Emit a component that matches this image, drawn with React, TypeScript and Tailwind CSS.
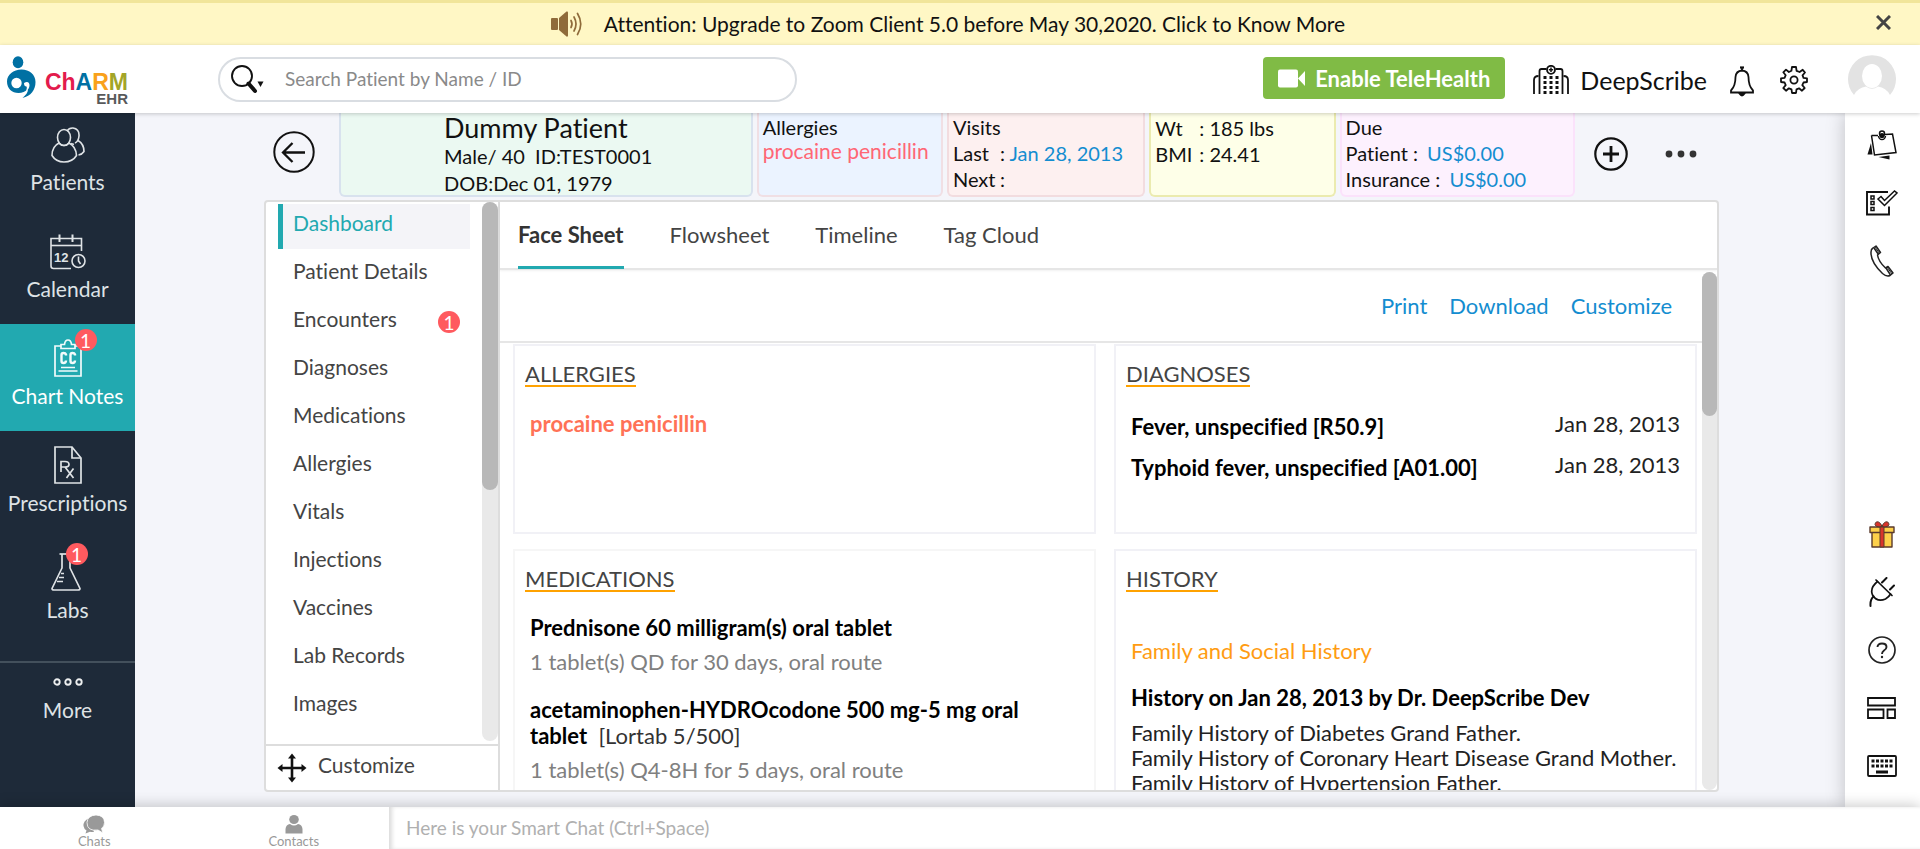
import type { ReactNode } from "react";

/* ---------- Icons ---------- */

const SpeakerIcon = () => (
  <svg width="32" height="26" viewBox="0 0 32 26" fill="#8f6b3a" aria-hidden="true">
    <rect x="0" y="7" width="7" height="12" rx="1" />
    <path d="M8 7 L15.5 0.5 Q17 0 17 1.5 V24.5 Q17 26 15.5 25.5 L8 19 Z" />
    <g fill="none" stroke="#8f6b3a" strokeWidth="1.7" strokeLinecap="round">
      <path d="M20 9.5 Q22 13 20 16.5" />
      <path d="M23 6 Q27 13 23 20" />
      <path d="M26.5 2.5 Q33 13 26.5 23.5" />
    </g>
  </svg>
);

const Logo = () => (
  <div className="flex w-[121px] shrink-0 items-start">
    <svg width="30" height="43" viewBox="0 0 30 43" aria-hidden="true">
      <ellipse cx="11" cy="6.200" rx="5.300" ry="6" fill="#0070a3" />
      <path d="M14.500 13.500 C22.500 13.500 28.500 18.500 28.500 26 C28.500 34 24 40 15.500 42 C19 39 21 36.500 21 33 C18.500 35.500 15 37 11.500 37 C5 37 0 32.500 0 25.500 C0 18.500 6.500 13.500 14.500 13.500 Z" fill="#0070a3" />
      <circle cx="9.500" cy="27" r="5.200" fill="#fff" />
      <path d="M17 27 Q22 24.500 22.500 29 Q22.500 33 18.500 35.500 Q20.500 32 19.500 30.500 Q17 30.500 17 27 Z" fill="#fff" />
    </svg>
    <div className="flex grow flex-col items-end pt-4 font-['Liberation_Sans'] font-bold">
      <span className="text-[23px] leading-[20px]">
        <span className="text-[#e31b4c]">Ch</span>
        <span className="text-[#0070a3]">A</span>
        <span className="text-[#f9a11b]">R</span>
        <span className="text-[#a3a528]">M</span>
      </span>
      <span className="text-[15px] leading-[14px] text-[#58595b]">EHR</span>
    </div>
  </div>
);

const SearchIcon = () => (
  <svg width="33" height="32" viewBox="0 0 33 32" aria-hidden="true">
    <circle cx="11" cy="12" r="10" fill="none" stroke="#111" strokeWidth="1.900" />
    <path d="M17.500 19.500 L24 27" stroke="#111" strokeWidth="4" strokeLinecap="round" />
    <path d="M26.500 17.500 h6 l-3 5.500 z" fill="#111" />
  </svg>
);

const VideoIcon = () => (
  <svg width="28" height="19" viewBox="0 0 28 19" fill="#fff" aria-hidden="true">
    <rect x="0" y="0.500" width="20" height="18" rx="2" />
    <path d="M27 2 V17 L20 9.500 Z" />
  </svg>
);

const HospitalIcon = () => (
  <svg width="36" height="30" viewBox="0 0 36 30" aria-hidden="true">
    <g fill="none" stroke="#111" strokeWidth="1.800">
      <path d="M13.500 4 H8.500 Q6.500 4 6.500 6 V29" />
      <path d="M22.500 4 H27.500 Q29.500 4 29.500 6 V29" />
      <path d="M5.500 11 Q1 11 1 15 V29" />
      <path d="M30.500 11 Q35 11 35 15 V29" />
      <circle cx="18" cy="4.800" r="4" />
      <path d="M18 2.500 V7 M15.800 4.800 H20.200" strokeWidth="1.500" />
    </g>
    <g fill="#111">
      {[10.5, 16.5, 22.5].map((x) =>
        [11, 16, 21, 26].map((y) => <rect key={`${x}-${y}`} x={x} y={y} width="3" height="3" />)
      )}
    </g>
  </svg>
);

const BellIcon = () => (
  <svg width="24" height="31" viewBox="0 0 24 31" fill="none" stroke="#111" strokeWidth="1.800" aria-hidden="true">
    <path d="M10 1.500 H14" strokeWidth="2.200" />
    <path d="M12 2 V5" />
    <path d="M1 26.500 V24.500 Q5.500 20 5.500 11 Q6 5 12 4.500 Q18 5 18.500 11 Q18.500 20 23 24.500 V26.500 Z" />
    <path d="M9.500 27.500 Q12 31.500 14.500 27.500 Z" fill="#111" />
  </svg>
);

const GearIcon = () => (
  <svg width="28" height="28" viewBox="0 0 28 28" fill="none" stroke="#111" strokeWidth="1.800" strokeLinejoin="round" aria-hidden="true">
    <path d="M12 1 H16 L16.600 4.800 L19.600 6 L22.700 3.800 L25 6.500 L22.500 9.300 L23.500 11.900 L27 12.300 V16 L23.500 16.500 L22.300 19.200 L24.700 22 L22 24.700 L19 22.300 L16.500 23.300 L16 27 H12 L11.500 23.300 L8.900 22.300 L6 24.700 L3.300 22 L5.700 19.200 L4.600 16.500 L1 16 V12.300 L4.600 11.800 L5.700 9.200 L3.300 6.300 L6 3.600 L8.900 6 L11.400 4.800 Z" />
    <circle cx="14" cy="14" r="3.600" />
  </svg>
);

const Avatar = () => (
  <svg width="48" height="48" viewBox="0 0 48 48" aria-hidden="true">
    <path d="M6 40 A24 24 0 1 1 42 40 Q38 32.500 30 31.500 Q24 36 18 31.500 Q10 32.500 6 40 Z" fill="#e3e3e3" />
    <ellipse cx="24" cy="21" rx="10" ry="12" fill="#fff" />
  </svg>
);

const PatientsIcon = () => (
  <svg width="34" height="36" viewBox="0 0 34 36" fill="none" stroke="#dfe3e6" strokeWidth="1.600" aria-hidden="true">
    <ellipse cx="13" cy="10.500" rx="6.500" ry="8" />
    <path d="M8 16 Q1 19.500 1 28.500 Q5 35 13 35 Q21.500 35 25.500 28.500 Q25 19.500 18 16 Q16 18.500 13 18.500 Q10 18.500 8 16 Z" />
    <path d="M16 4 Q18 0.800 22 1 Q28.500 2 28 9 Q27.500 14.500 24 16" />
    <path d="M27 13.500 Q33 17 33 24.500 Q31 27.500 27.500 28" />
    <path d="M20 16.500 L23 17.500" />
  </svg>
);

const CalendarIcon = () => (
  <svg width="36" height="36" viewBox="0 0 36 36" fill="none" stroke="#dfe3e6" strokeWidth="1.600" aria-hidden="true">
    <path d="M31.500 17 V4.500 H1 V32 Q1 34.500 3.500 34.500 H21" />
    <path d="M1 11.500 H31.500" />
    <path d="M9.500 0.500 V8 M22.500 0.500 V8" strokeWidth="2" />
    <circle cx="28.500" cy="27" r="6.500" />
    <path d="M28.500 22.500 V27 L30.500 30" />
    <text x="4" y="27.500" fill="#dfe3e6" stroke="none" fontFamily="Liberation Sans" fontWeight="700" fontSize="13">12</text>
  </svg>
);

const ChartIcon = () => (
  <svg width="28" height="38" viewBox="0 0 28 38" fill="none" stroke="#f2fbfb" strokeWidth="1.700" aria-hidden="true">
    <path d="M7 7 H1 V37 H27 V7 H21" />
    <path d="M7 9.500 V5.500 H10.500 Q11 1 14 1 Q17 1 17.500 5.500 H21 V9.500 Z" />
    <g strokeWidth="2.400">
      <path d="M12 16.500 V15.500 Q11.500 14 9.500 14 Q7.500 14 7.500 16 V22 Q7.500 24 9.500 24 Q12 24 12 21.500" />
      <path d="M21 16.500 V15.500 Q20.500 14 18.500 14 Q16.500 14 16.500 16 V22 Q16.500 24 18.500 24 Q21 24 21 21.500" />
    </g>
    <path d="M7 28.500 H21 M4.500 32 H23.500" strokeWidth="1.400" />
  </svg>
);

const RxIcon = () => (
  <svg width="28" height="38" viewBox="0 0 28 38" fill="none" stroke="#dfe3e6" strokeWidth="1.700" aria-hidden="true">
    <path d="M18 1 H1 V37 H27 V12 Z" />
    <path d="M18 1 V12 H27" />
    <path d="M7 26 V15.500 H11 Q15 15.500 15 18.500 Q15 21 11 21 H7 M11 21 L19.500 32 M19.500 22.500 L12.500 32" />
  </svg>
);

const FlaskIcon = () => (
  <svg width="34" height="38" viewBox="0 0 34 38" fill="none" stroke="#dfe3e6" strokeWidth="1.700" strokeLinejoin="round" aria-hidden="true">
    <path d="M8.500 1 H21" />
    <path d="M11 1 V15 L1 35.500 Q1 37 3 37 H27 Q29 37 29 35.500 L19 15 V1" />
    <path d="M10 20.500 H13 M8 24.500 H13 M6 28.500 H12" strokeWidth="1.400" />
  </svg>
);

const MoreIcon = () => (
  <svg width="30" height="8" viewBox="0 0 30 8" fill="none" stroke="#eceeef" strokeWidth="1.900" aria-hidden="true">
    <circle cx="4" cy="4" r="2.700" />
    <circle cx="15" cy="4" r="2.700" />
    <circle cx="26" cy="4" r="2.700" />
  </svg>
);

const BackIcon = () => (
  <svg width="42" height="42" viewBox="0 0 42 42" fill="none" stroke="#111" strokeWidth="2" aria-hidden="true">
    <circle cx="21" cy="21" r="19.700" />
    <path d="M32 21.500 H10.500 M19.500 12 L10 21.500 L19.500 31" strokeWidth="2.300" />
  </svg>
);

const PlusIcon = () => (
  <svg width="34" height="34" viewBox="0 0 34 34" fill="none" stroke="#111" strokeWidth="2.200" aria-hidden="true">
    <circle cx="17" cy="17" r="15.700" />
    <path d="M17 9 V25 M9 17 H25" strokeWidth="2.800" />
  </svg>
);

const DotsIcon = () => (
  <svg width="32" height="8" viewBox="0 0 32 8" fill="#333" aria-hidden="true">
    <circle cx="4" cy="4" r="3.400" />
    <circle cx="16" cy="4" r="3.400" />
    <circle cx="28" cy="4" r="3.400" />
  </svg>
);

const MoveIcon = () => (
  <svg width="30" height="30" viewBox="0 0 30 30" fill="#111" stroke="#111" aria-hidden="true">
    <path d="M15 4 V26 M4 15 H26" strokeWidth="2.600" fill="none" />
    <path d="M15 0.500 L19 5.500 H11 Z M15 29.500 L19 24.500 H11 Z M0.500 15 L5.500 11 V19 Z M29.500 15 L24.500 11 V19 Z" stroke="none" />
  </svg>
);

const NotesIcon = () => (
  <svg width="30" height="30" viewBox="0 0 30 30" fill="none" stroke="#111" strokeWidth="1.500" aria-hidden="true">
    <path d="M4.500 5.500 H11 M18 4.500 L25.500 4 L29 22.500 L7.500 25 L4.500 5.500" />
    <path d="M4 13 L5.500 24.500 H0.500 Z" fill="#111" stroke="none" />
    <path d="M11.500 27 L22.500 25.500 V29.500 Z" fill="#111" stroke="none" />
    <circle cx="15" cy="3.500" r="2.500" />
    <path d="M11.500 6 Q12 9.500 15 9.500 Q18 9.500 18.500 6" />
    <circle cx="15" cy="5.500" r="1.800" fill="#111" />
  </svg>
);

const ChecklistIcon = () => (
  <svg width="32" height="26" viewBox="0 0 32 26" fill="none" stroke="#111" strokeWidth="1.700" aria-hidden="true">
    <path d="M22 2 H1 V24.500 H23 V16.500" strokeWidth="1.900" />
    <path d="M5 6 h3 v3 h-3 z M5 11.500 h3 v3 h-3 z M5 17.500 h3 v3 h-3 z" strokeWidth="1.500" />
    <path d="M15 6.500 L12 9 L18.500 15.500 L31 3 L28.500 1 L18.500 10.500 Z" strokeWidth="1.500" />
  </svg>
);

const PhoneIcon = () => (
  <svg width="24" height="32" viewBox="0 0 24 32" fill="none" stroke="#222" strokeWidth="1.500" strokeLinejoin="round" aria-hidden="true">
    <path d="M3 3 L6 1 L10.500 7.500 L7.500 10 Q8.500 16.500 15.500 23 L18 21.500 L23 28 L20 30.500 Q16.500 32 12.500 28.500 Q0.500 17 1 7 Q1 4 3 3 Z" />
    <path d="M4 3 L8.500 9.500 M16 23 L20.500 30" />
    <path d="M5 2 L9.500 8.500 M17 22 L22 29" strokeWidth="1" />
  </svg>
);

const GiftIcon = () => (
  <svg width="26" height="27" viewBox="0 0 26 27" stroke="#5a3a2c" strokeWidth="1.400" strokeLinejoin="round" aria-hidden="true">
    <path d="M3 11 H23 V26 H3 Z" fill="#fdd04a" />
    <path d="M1 6 H25 V11.500 H1 Z" fill="#fdd04a" />
    <path d="M11 6 H15 V26 H11 Z" fill="#d9342b" strokeWidth="1" />
    <path d="M13 5.500 Q6.500 6.500 6 3.500 Q6.500 0 9.500 1 Q12 2 13 5.500 Q14 2 16.500 1 Q19.500 0 20 3.500 Q19.500 6.500 13 5.500 Z" fill="#d9342b" strokeWidth="1" />
  </svg>
);

const PlugIcon = () => (
  <svg width="26" height="30" viewBox="0 0 26 30" fill="none" stroke="#111" strokeWidth="1.700" strokeLinecap="round" aria-hidden="true">
    <path d="M7 3 L23 18.500" />
    <path d="M8.500 4.500 Q0.500 11 3.500 18 Q8 25.500 16.500 22 Q20 20 21.500 17" />
    <path d="M13 5.500 L17.500 1 M21 12.500 L25 8.500" strokeWidth="2" />
    <path d="M4.500 19.500 Q1 22.500 1.500 29" strokeWidth="2" />
  </svg>
);

const HelpIcon = () => (
  <svg width="28" height="28" viewBox="0 0 28 28" fill="none" stroke="#222" strokeWidth="1.700" aria-hidden="true">
    <circle cx="14" cy="14" r="13" />
    <path d="M9.500 11 Q9.500 7.500 14 7.500 Q18.500 7.500 18.500 11 Q18.500 13 16 14.500 Q14 16 14 18" strokeWidth="1.900" />
    <circle cx="14" cy="21" r="1.200" fill="#222" stroke="none" />
  </svg>
);

const LayoutIcon = () => (
  <svg width="29" height="22" viewBox="0 0 29 22" fill="none" stroke="#111" strokeWidth="1.800" aria-hidden="true">
    <path d="M1 1 H28 V8.500 H1 Z M1 12.500 H16.500 V21 H1 Z M20.500 12.500 H28 V21 H20.500 Z" />
  </svg>
);

const KeyboardIcon = () => (
  <svg width="30" height="22" viewBox="0 0 30 22" aria-hidden="true">
    <rect x="1" y="1" width="28" height="20" rx="1" fill="none" stroke="#111" strokeWidth="1.800" />
    <g fill="#111">
      {[4.5, 9, 13.5, 18, 22.5].map((x) => (
        <path key={x} d={`M${x} 4.500 h3 v3 h-3 z M${x} 9.500 h3 v3 h-3 z`} />
      ))}
      <rect x="9" y="15.500" width="12" height="3" />
    </g>
  </svg>
);

const ChatsIcon = () => (
  <svg width="22" height="19" viewBox="0 0 22 19" aria-hidden="true">
    <path d="M6 3 Q0 6 0.500 11 Q1 14 3.500 15.500 L2.500 18.500 L7 16.800 Q9 17.200 11 16.800 Z" fill="#999" />
    <path d="M13 0 Q21.500 0.500 21.500 7.500 Q21.500 11.500 18.500 13.500 L20 18 L15 15 Q4 16.500 4 7.500 Q4.500 0.500 13 0 Z" fill="#999" stroke="#fff" strokeWidth="0.800" />
  </svg>
);

const ContactIcon = () => (
  <svg width="18" height="19" viewBox="0 0 18 19" fill="#999" aria-hidden="true">
    <ellipse cx="9" cy="4.500" rx="4.800" ry="4.500" />
    <path d="M0.500 18.500 V14 Q1 9.500 5 9 Q9 12 13 9 Q17 9.500 17.500 14 V18.500 Z" />
  </svg>
);

/* ---------- Shared parts ---------- */

const Count = ({ value, className }: { value: number; className: string }) => (
  <span className={`grid size-[22px] place-items-center rounded-full bg-[#ff5a5f] text-[19px] leading-none text-white ${className}`}>
    {value}
  </span>
);

type NavEntry = { label: string; icon: ReactNode; count?: number; badge?: string; active?: boolean };

const mainNav: NavEntry[] = [
  { label: "Patients", icon: <PatientsIcon /> },
  { label: "Calendar", icon: <CalendarIcon /> },
  { label: "Chart Notes", icon: <ChartIcon />, count: 1, badge: "absolute -top-[7px] left-[21px]", active: true },
  { label: "Prescriptions", icon: <RxIcon /> },
  { label: "Labs", icon: <FlaskIcon />, count: 1, badge: "absolute -top-[7px] left-[15px]" },
];

const sections = [
  "Dashboard",
  "Patient Details",
  "Encounters",
  "Diagnoses",
  "Medications",
  "Allergies",
  "Vitals",
  "Injections",
  "Vaccines",
  "Lab Records",
  "Images",
];

const tabs = ["Face Sheet", "Flowsheet", "Timeline", "Tag Cloud"];

const diagnoses = [
  ["Fever, unspecified [R50.9]", "Jan 28, 2013"],
  ["Typhoid fever, unspecified [A01.00]", "Jan 28, 2013"],
];

const Card = ({ title, className, children }: { title: string; className: string; children: ReactNode }) => (
  <section className={`min-w-0 border-2 px-[10px] pt-4 ${className}`}>
    <h2 className="inline-block border-b-2 border-[#ffa200] align-top text-[22px] leading-[23px] text-[#444]">{title}</h2>
    <div className="px-[5px]">{children}</div>
  </section>
);

/* ---------- Regions ---------- */

const Banner = () => (
  <div className="flex h-[45px] shrink-0 items-center border-t-[3px] border-[#f1e59a] bg-[#fff7c5] px-[25px]">
    <div className="flex grow items-center justify-center gap-[21px]">
      <SpeakerIcon />
      <a href="#zoom" className="text-[21px] leading-[26px] text-[#111]">
        Attention: Upgrade to Zoom Client 5.0 before May 30,2020. Click to Know More
      </a>
    </div>
    <button type="button" aria-label="Dismiss" className="grid size-6 place-items-center pb-1">
      <svg width="15" height="15" viewBox="0 0 15 15" stroke="#444" strokeWidth="3" aria-hidden="true">
        <path d="M1 1 L14 14 M14 1 L1 14" />
      </svg>
    </button>
  </div>
);

const Header = () => (
  <header className="relative z-20 flex h-[68px] shrink-0 items-start bg-white px-[7px] shadow-[0_1px_4px_rgba(0,0,0,0.2)]">
    <div className="pt-[11px]">
      <Logo />
    </div>
    <div className="mt-3 ml-[90px] flex h-[45px] w-[579px] items-center rounded-full border-2 border-[#d9dde2] pl-[11px]">
      <button type="button" aria-label="Search options">
        <SearchIcon />
      </button>
      <input
        aria-label="Search Patient by Name / ID"
        placeholder="Search Patient by Name / ID"
        className="ml-[21px] min-w-0 grow pr-5 text-[19px] text-[#333] outline-none placeholder:text-[#8a8a8a]"
      />
    </div>
    <div className="ml-auto flex items-start">
      <button type="button" className="mt-3 flex h-[42px] items-center gap-[9px] rounded-[4px] bg-[#80bb45] px-[15px] text-[22px] font-bold text-white">
        <VideoIcon />
        Enable TeleHealth
      </button>
      <button type="button" className="mt-[18px] ml-7 flex items-center gap-[11px] text-[25px] leading-[34px] text-[#111]">
        <HospitalIcon />
        DeepScribe
      </button>
      <button type="button" aria-label="Notifications" className="mt-[21px] ml-[23px]">
        <BellIcon />
      </button>
      <button type="button" aria-label="Settings" className="mt-[21px] ml-[26px]">
        <GearIcon />
      </button>
      <button type="button" aria-label="Account" className="mt-[10px] mr-[17px] ml-[40px]">
        <Avatar />
      </button>
    </div>
  </header>
);

const MainNav = () => (
  <nav className="flex w-[135px] shrink-0 flex-col bg-[#1e2a39] text-[21px] leading-[26px] text-[#dfe3e6]">
    <div className="-mt-[3px] border-b-2 border-[#43505c] pb-4">
      {mainNav.map((n) => (
        <a
          key={n.label}
          href={`#${n.label}`}
          className={`flex h-[107px] flex-col items-center pt-3 whitespace-nowrap ${n.active ? "bg-[#22a9b0] text-white" : ""}`}
        >
          <span className="relative flex h-[41px] items-end">
            {n.icon}
            {n.count && <Count value={n.count} className={n.badge ?? ""} />}
          </span>
          <span className="mt-[6px]">{n.label}</span>
        </a>
      ))}
    </div>
    <button type="button" className="flex flex-col items-center gap-[11px] pt-[15px]">
      <MoreIcon />
      More
    </button>
  </nav>
);

const infoCard = "rounded-b-[6px] border-2 border-t-0 px-1 text-[20px] leading-[26px] text-[#111] whitespace-nowrap overflow-hidden";

const PatientBar = () => (
  <div className="flex h-[84px] shrink-0 items-start pr-[22px] pl-[9px]">
    <button type="button" aria-label="Back" className="mt-[18px]">
      <BackIcon />
    </button>
    <div className="ml-[24px] grid h-full grow grid-cols-[413fr_186fr_198fr_186fr_235fr] gap-1">
      <div className={`${infoCard} border-[#d8e2ee] bg-[#ebf9f2]`}>
        <div className="pl-[99px] leading-[27px]">
          <h1 className="text-[27px] leading-[30px]">Dummy Patient</h1>
          <p>Male/ 40&nbsp; ID:TEST0001</p>
          <p>DOB:Dec 01, 1979</p>
        </div>
      </div>
      <div className={`${infoCard} border-[#f0dfe4] bg-[#ebf3ff] pt-[2px]`}>
        <p className="leading-6">Allergies</p>
        <p className="text-[21px] leading-6 text-[#ff6675]">procaine penicillin</p>
      </div>
      <div className={`${infoCard} border-[#f2dcdf] bg-[#fdf0f0] pt-px`}>
        <p>Visits</p>
        <dl className="grid grid-cols-[47px_auto] justify-start">
          <dt>Last</dt>
          <dd>: <a href="#visit" className="text-[#148dd0]">Jan 28, 2013</a></dd>
          <dt>Next</dt>
          <dd>:</dd>
        </dl>
      </div>
      <div className={`${infoCard} border-[#ebebaf] bg-[#feffe8] pt-[2px]`}>
        <dl className="grid grid-cols-[44px_auto] justify-start">
          <dt>Wt</dt>
          <dd>: 185 lbs</dd>
          <dt>BMI</dt>
          <dd>: 24.41</dd>
        </dl>
      </div>
      <div className={`${infoCard} border-[#fbe2fb] bg-[#fdf1fe] pt-px`}>
        <p>Due</p>
        <p>Patient : <a href="#due" className="ml-1 text-[#148dd0]">US$0.00</a></p>
        <p>Insurance : <a href="#due" className="ml-1 text-[#148dd0]">US$0.00</a></p>
      </div>
    </div>
    <button type="button" aria-label="Add" className="mt-[24px] ml-[19px]">
      <PlusIcon />
    </button>
    <button type="button" aria-label="More actions" className="mt-[37px] ml-[37px]">
      <DotsIcon />
    </button>
  </div>
);

const SectionList = () => (
  <aside className="flex w-[234px] shrink-0 flex-col border-r-2 border-[#ddd]">
    <div className="flex min-h-0 grow">
      <ul className="flex grow flex-col gap-[3px] overflow-hidden pt-[2px] pr-[12px] pl-[12px] text-[21px] text-[#444]">
        {sections.map((s, i) => (
          <li key={s}>
            <a
              href={`#${s}`}
              className={`flex h-[45px] items-center justify-between border-l-[5px] pr-[10px] pb-[7px] pl-[10px] ${
                i === 0 ? "border-[#22a9b0] bg-[#f4f4f8] text-[#22a9b0]" : "border-transparent"
              }`}
            >
              {s}
              {s === "Encounters" && <Count value={1} className="mt-[6px]" />}
            </a>
          </li>
        ))}
      </ul>
      <div className="mb-[3px] w-4 rounded-full bg-[#e9e9e9]">
        <div className="h-[288px] rounded-full bg-[#b8b8b8]" />
      </div>
    </div>
    <button type="button" className="flex h-[46px] shrink-0 items-center gap-[11px] border-t-2 border-[#ddd] pl-[11px] text-[21px] text-[#444]">
      <MoveIcon />
      <span className="pb-[6px]">Customize</span>
    </button>
  </aside>
);

const FaceSheet = () => (
  <div className="min-w-0 grow overflow-hidden">
    <div className="flex h-[71px] items-center justify-end gap-[22px] border-b-2 border-[#e6e6e6] pr-[30px] pb-[2px] text-[22px] text-[#148dd0]">
      <a href="#print">Print</a>
      <a href="#download">Download</a>
      <a href="#customize">Customize</a>
    </div>
    <div className="mt-px grid grid-cols-2 gap-x-[18px] gap-y-[15px] pr-[5px] pl-[13px] text-[22px] leading-[26px]">
      <Card title="ALLERGIES" className="h-[190px] border-[#f1f1f6]">
        <p className="mt-[15px] leading-[41px] font-bold text-[#ff7256]">procaine penicillin</p>
      </Card>
      <Card title="DIAGNOSES" className="h-[190px] border-[#f1f1f6]">
        <table className="mt-[15px] w-full">
          <tbody>
            {diagnoses.map(([name, date]) => (
              <tr key={name} className="h-[41px]">
                <td className="pt-[6px] font-bold text-black">{name}</td>
                <td className="text-right text-[#222]">{date}</td>
              </tr>
            ))}
          </tbody>
        </table>
      </Card>
      <Card title="MEDICATIONS" className="h-[400px] border-[#f6f6f6]">
        <div className="mt-[22px] flex flex-col gap-[22px] pr-10">
          <div>
            <p className="font-bold text-black">Prednisone 60 milligram(s) oral tablet</p>
            <p className="mt-2 text-[#808080]">1 tablet(s) QD for 30 days, oral route</p>
          </div>
          <div>
            <p className="text-[#333]">
              <strong className="text-black">acetaminophen-HYDROcodone 500 mg-5 mg oral tablet</strong>&nbsp; [Lortab 5/500]
            </p>
            <p className="mt-2 text-[#808080]">1 tablet(s) Q4-8H for 5 days, oral route</p>
          </div>
        </div>
      </Card>
      <Card title="HISTORY" className="h-[400px] border-[#f1f1f6]">
        <p className="mt-[45px] text-[#ff9c12]">Family and Social History</p>
        <p className="mt-[21px] font-bold text-black">History on Jan 28, 2013 by Dr. DeepScribe Dev</p>
        <div className="mt-[9px] leading-[25px] whitespace-nowrap text-[#222]">
          <p>Family History of Diabetes Grand Father.</p>
          <p>Family History of Coronary Heart Disease Grand Mother.</p>
          <p>Family History of Hypertension Father.</p>
        </div>
      </Card>
    </div>
  </div>
);

const Workspace = () => (
  <div className="mt-[3px] mb-[15px] flex min-h-0 grow overflow-hidden rounded-[4px] border-2 border-[#ddd] bg-white">
    <SectionList />
    <div className="flex min-w-0 grow flex-col">
      <div className="flex h-[68px] shrink-0 gap-[46px] border-b-2 border-[#e6e6e6] pl-[18px] text-[22px] leading-[66px] text-[#444] shadow-[0_1px_2px_rgba(0,0,0,0.06)]">
        {tabs.map((t, i) => (
          <a key={t} href={`#${t}`} className={i === 0 ? "h-[67px] border-b-[3px] border-[#22a9b0] font-bold text-[#333]" : ""}>
            {t}
          </a>
        ))}
      </div>
      <div className="mt-px flex min-h-0 grow pt-px">
        <FaceSheet />
        <div className="w-[15px] shrink-0 rounded-full bg-[#e9e9e9]">
          <div className="h-[144px] rounded-full bg-[#b8b8b8]" />
        </div>
      </div>
    </div>
  </div>
);

const ToolRail = () => (
  <aside className="z-10 flex w-[75px] shrink-0 flex-col items-center bg-white pt-[15px] pr-[2px] pb-[12px] shadow-[0_0_18px_rgba(0,0,0,0.22)]">
    <div className="flex flex-col">
      <button type="button" aria-label="Sticky notes" className="grid h-[58px] w-10 place-items-center pb-6"><NotesIcon /></button>
      <button type="button" aria-label="Tasks" className="grid h-[58px] w-10 place-items-center pb-6"><ChecklistIcon /></button>
      <button type="button" aria-label="Calls" className="grid h-[58px] w-10 place-items-center pb-6"><PhoneIcon /></button>
    </div>
    <div className="mt-auto flex flex-col">
      <button type="button" aria-label="Offers" className="grid h-[58px] w-10 place-items-center"><GiftIcon /></button>
      <button type="button" aria-label="Integrations" className="grid h-[58px] w-10 place-items-center"><PlugIcon /></button>
      <button type="button" aria-label="Help" className="grid h-[58px] w-10 place-items-center"><HelpIcon /></button>
      <button type="button" aria-label="Layout" className="grid h-[58px] w-10 place-items-center"><LayoutIcon /></button>
      <button type="button" aria-label="Keyboard shortcuts" className="grid h-[58px] w-10 place-items-center"><KeyboardIcon /></button>
    </div>
  </aside>
);

const Footer = () => (
  <footer className="relative z-20 flex h-[42px] shrink-0 bg-white shadow-[0_-2px_14px_rgba(0,0,0,0.2)]">
    <div className="grid w-[389px] shrink-0 grid-cols-2 text-[13px] leading-[14px] text-[#999]">
      <button type="button" className="flex flex-col items-center pt-2 pr-[6px]">
        <ChatsIcon />
        Chats
      </button>
      <button type="button" className="flex flex-col items-center pt-2 pl-[4px]">
        <ContactIcon />
        Contacts
      </button>
    </div>
    <input
      aria-label="Smart Chat"
      placeholder="Here is your Smart Chat (Ctrl+Space)"
      className="min-w-0 grow pl-[17px] text-[19px] outline-none shadow-[inset_4px_0_4px_-1px_rgba(0,0,0,0.14)] placeholder:text-[#b0b0b0]"
    />
  </footer>
);

export default function App() {
  return (
    <div className="flex h-screen flex-col overflow-hidden bg-[#f4f5fa] font-['Lato',sans-serif] [font-variant-ligatures:none]">
      <Banner />
      <Header />
      <div className="flex min-h-0 grow">
        <MainNav />
        <main className="flex min-w-0 grow flex-col pr-[126px] pl-[129px]">
          <PatientBar />
          <Workspace />
        </main>
        <ToolRail />
      </div>
      <Footer />
    </div>
  );
}
